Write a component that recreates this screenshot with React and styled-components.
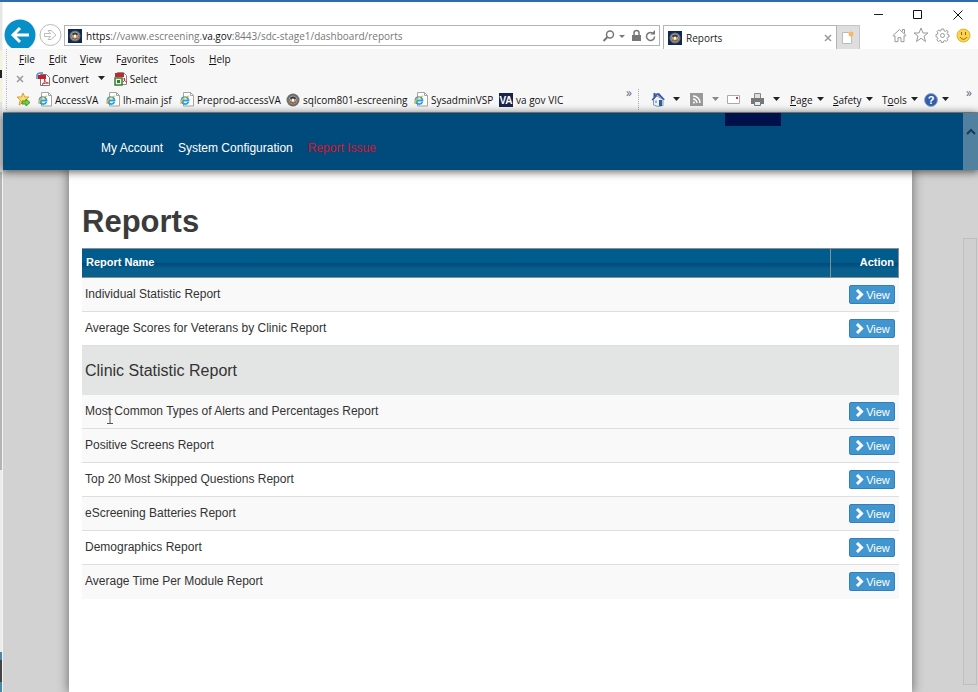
import React from "react";
import styled, { createGlobalStyle, css } from "styled-components";

const Global = createGlobalStyle`
  * { box-sizing: border-box; }
  body { margin: 0; background: #fff; font-family: "Liberation Sans", Arial, sans-serif; }
  button, input { font: inherit; }
  svg { flex: none; }
`;

const uiFont = `"Open Sans", "Noto Sans", sans-serif`;

const Desktop = styled.div`
  display: flex;
  flex-direction: column;
  height: 100vh;
  overflow: hidden;
  border-top: 2px solid #2f6ca8;
`;
const Body = styled.div`
  flex: 1;
  min-height: 0;
  display: flex;
`;
const Behind = styled.div`
  flex: none;
  width: 3px;
  border-right: 1px solid #f4f4f4;
  background: linear-gradient(#e6e6e6 0 48px, #f3f2dc 48px 68px, #222 68px 76px, #f3f2dc 76px 100px, #e2e2e2 100px 170px, #b4b4b4 170px 468px, #ececec 468px 650px, #4b86a6 650px 658px, #444 658px 680px, #4b86a6 680px);
`;
const Browser = styled.div`
  flex: 1;
  min-width: 0;
  display: flex;
  flex-direction: column;
`;
const Plain = styled.button`
  flex: none;
  display: flex;
  align-items: center;
  justify-content: center;
  border: 0;
  padding: 0;
  background: none;
  color: inherit;
`;
const Caption = styled.div`
  flex: none;
  height: 23px;
  display: flex;
  justify-content: flex-end;
  align-items: center;
  padding: 2px 11px 0 0;
  gap: 22px;
`;
const CaptionButton = styled(Plain)`
  width: 18px;
  height: 18px;
`;
const AddressRow = styled.div`
  flex: none;
  height: 24px;
  display: flex;
  align-items: flex-start;
  font-family: ${uiFont};
  font-size: 10px;
`;
const NavButtons = styled.div`
  flex: none;
  width: 61px;
  height: 29px;
  margin-top: -6px;
  display: flex;
  gap: 3px;
  overflow: hidden;
`;
const NavButton = styled(Plain)`
  align-items: flex-start;
`;
const AddressBox = styled.div`
  flex: 1;
  height: 21px;
  min-width: 0;
  display: flex;
  align-items: center;
  border: 1px solid #b4b4b4;
  padding: 0 3px;
  background: #fff;
`;
const Url = styled.a`
  flex: 1;
  min-width: 0;
  padding-left: 4px;
  overflow: hidden;
  white-space: nowrap;
  color: #777;
  text-decoration: none;
  b { font-weight: 400; color: #111; }
`;
const Tab = styled.div`
  flex: none;
  width: 174px;
  height: 24px;
  margin-left: 3px;
  display: flex;
  align-items: center;
  gap: 4px;
  padding: 0 4px;
  border: 1px solid #b4b4b4;
  border-bottom: 0;
  color: #222;
`;
const TabTitle = styled.span`
  flex: 1;
`;
const NewTab = styled(Plain)`
  width: 23px;
  height: 24px;
  background: #dedede;
  border: 1px solid #c4c4c4;
  border-left: 0;
  border-bottom: 0;
`;
const ToolIcons = styled.div`
  flex: none;
  width: 118px;
  display: flex;
  justify-content: flex-end;
  gap: 6px;
  padding: 2px 7px 0 0;
`;
const Toolbars = styled.div`
  flex: none;
  height: 64px;
  background: #f7f7f7;
  border-bottom: 1px solid #999;
  font-family: ${uiFont};
  font-size: 10px;
  color: #111;
`;
const Bar = styled.div`
  height: ${(p) => p.$h}px;
  display: flex;
  align-items: center;
  gap: ${(p) => p.$gap || 0}px;
  padding-left: ${(p) => p.$left}px;
  margin-left: 3px;
  border-left: 1px dotted #bbb;
  white-space: nowrap;
`;
const MenuItem = styled(Plain)`
  width: ${(p) => p.$w}px;
  justify-content: flex-start;
  u { text-underline-offset: 1px; }
`;
const Command = styled(Plain)`
  gap: 2px;
`;
const Favorite = styled.a`
  flex: none;
  width: ${(p) => p.$w}px;
  display: flex;
  align-items: center;
  gap: 3px;
  color: inherit;
  text-decoration: none;
`;
const CommandBar = styled.div`
  flex: none;
  width: 340px;
  height: 21px;
  display: flex;
  align-items: center;
  border-left: 1px dotted #aaa;
  padding-left: 12px;
`;
const Tool = styled(Plain)`
  width: ${(p) => p.$w}px;
  justify-content: flex-start;
  gap: 4px;
`;
const Chevrons = styled(Plain)`
  align-self: flex-start;
  line-height: 8px;
  font-size: 12px;
  color: #667;
  margin-left: ${(p) => (p.$push ? "auto" : "0")};
  margin-right: ${(p) => (p.$push ? "6px" : "0")};
`;
const Page = styled.div`
  flex: 1;
  min-height: 0;
  display: flex;
  flex-direction: column;
  background: #d2d2d2;
`;
const SiteNav = styled.nav`
  flex: none;
  height: 57px;
  position: relative;
  z-index: 1;
  display: flex;
  background: #004b7c;
  box-shadow: 0 1px 8px 1px rgba(0, 0, 0, 0.6);
`;
const NavLinks = styled.div`
  flex: 1;
  display: flex;
  gap: 15px;
  padding: 27px 0 0 98px;
  font-size: 12px;
  line-height: 16px;
`;
const NavLink = styled.a`
  color: ${(p) => (p.$alert ? "#d4142c" : "#fff")};
  text-decoration: none;
`;
const NavBlock = styled.div`
  flex: none;
  width: 56px;
  height: 13px;
  margin-right: 182px;
  background: #00104a;
`;
const ScrollTop = styled(Plain)`
  width: 15px;
  height: 57px;
  align-items: flex-start;
  padding-top: 14px;
  background: #52809f;
`;
const Scene = styled.div`
  flex: 1;
  min-height: 0;
  display: flex;
`;
const Sheet = styled.main`
  flex: 1;
  min-width: 0;
  margin: 0 51px 0 66px;
  padding: 33px 13px 0;
  background: #fff;
  box-shadow: 0 0 10px 1px rgba(0, 0, 0, 0.45);
`;
const Track = styled.div`
  flex: none;
  width: 15px;
  padding: 68px 1px 7px 0;
  display: flex;
`;
const Thumb = styled.div`
  flex: 1;
  border: 1px solid #bfbfbf;
  background: #d0d0d0;
`;
const Title = styled.h1`
  margin: 0;
  height: 45px;
  font-size: 31px;
  line-height: 38px;
  color: #3b3b3b;
`;
const ReportTable = styled.table`
  width: 100%;
  border-collapse: separate;
  border-spacing: 0;
  table-layout: fixed;
  font-size: 12px;
  color: #333;
`;
const Head = styled.th`
  width: ${(p) => (p.$end ? "69px" : "auto")};
  height: 30px;
  padding: 0 4px 2px;
  text-align: ${(p) => (p.$end ? "right" : "left")};
  font-size: 11px;
  line-height: 16px;
  color: #fff;
  background: linear-gradient(#005c8c 0 48%, #004a7a 52%, #08608e 72%, #085f8c);
  border: 1px solid #8b8f94;
  border-left-width: ${(p) => (p.$end ? "1px" : "0")};
  border-right-width: ${(p) => (p.$end ? "1px" : "0")};
`;
const Row = styled.tr`
  background: ${(p) => (p.$striped ? "#f9f9f9" : "#fff")};
`;
const Cell = styled.td`
  height: 34px;
  padding: ${(p) => (p.$end ? "7px 4px 6px" : "8px 3px 9px")};
  vertical-align: top;
  line-height: 16px;
  border-bottom: 1px solid #dedede;
  ${(p) => p.$last && css`border-bottom: 0;`}
`;
const Group = styled.td`
  height: 49px;
  padding: 0 3px;
  font-size: 16px;
  background: #e3e5e4;
`;
const ViewButton = styled.button`
  display: flex;
  align-items: center;
  justify-content: center;
  gap: 2px;
  width: 46px;
  height: 19px;
  margin-left: auto;
  padding: 0;
  border: 1px solid #357ebd;
  border-radius: 2px;
  background: #4296cf;
  color: #fff;
  font-size: 11px;
  line-height: 16px;
`;
const Pointer = styled.svg`
  position: absolute;
  left: 106px;
  top: 409px;
  z-index: 3;
`;

const Caret = ({ color = "#222" }) => (
  <svg width="7" height="5" viewBox="0 0 7 5"><path d="M0 0h7L3.500 4z" fill={color} /></svg>
);
const Seal = ({ square }) => (
  <svg width="14" height="14" viewBox="0 0 14 14">
    {square && <path d="M0 0h14v14H0z" fill="#0d2a52" />}
    <circle cx="7" cy="7" r={square ? 5.500 : 6.500} fill="#6d6f76" />
    <circle cx="7" cy="7" r="4" fill="#26406b" stroke="#a49a83" />
    <path d="M3.500 5l2 1.500L7 5l1.500 1.500 2-1.500L9.500 9 7 10 4.500 9z" fill="#d9a35c" />
    <path d="M6 6h2v2l-1 1-1-1z" fill="#fff" />
    <path d="M5 9l2 1 2-1" stroke="#c44c35" fill="none" />
  </svg>
);
const IePage = () => (
  <svg width="14" height="15" viewBox="0 0 14 15">
    <path d="M3.500.5h7l3 3v10.500h-10z" fill="#fff" stroke="#a5a5a5" />
    <path d="M10.500.5v3h3" fill="none" stroke="#a5a5a5" />
    <path d="M2 8.500h6.500C8.500 3.800 1.500 4 1.500 8.500c0 4.200 5.500 4.500 7 1.600" fill="none" stroke="#2c9fe0" strokeWidth="1.800" />
    <path d="M.8 12c-.5-3.500 4-8 8.500-7.800" fill="none" stroke="#f2bd35" strokeWidth="1.200" />
  </svg>
);
const House = () => (
  <svg width="15" height="15" viewBox="0 0 15 15" fill="none" stroke="#999">
    <path d="M1 7.500l6.500-6 6.500 6-1 1-1-.8v6H9v-4H6v4H3v-6l-1 .8z" />
    <path d="M10.500 3.500v-2h2v4" />
  </svg>
);
const ColorHouse = () => (
  <svg width="15" height="15" viewBox="0 0 15 15">
    <path d="M2.500 7.500L6 4l6 3.500v6l-5 1-4.500-1.500z" fill="#eef2f6" stroke="#8b97ab" />
    <path d="M.5 8L5 1.500 8 1l6 6.500-1.500.5L6.500 3 2 8.500z" fill="#3b5fa8" />
    <path d="M2.500 1h2v3l-2 1z" fill="#3558a5" />
    <path d="M4 8.500h2V11H4z" fill="#9dafc8" />
    <path d="M8 8h3v6H8z" fill="#2563a8" />
  </svg>
);

const favorites = [
  [68, "AccessVA", IePage],
  [74, "lh-main jsf", IePage],
  [106, "Preprod-accessVA", IePage],
  [128, "sqlcom801-escreening", Seal],
  [85, "SysadminVSP", IePage],
];
const menus = [[30, "", "F", "ile"], [31, "", "E", "dit"], [36, "", "V", "iew"], [54, "F", "a", "vorites"], [39, "", "T", "ools"], [30, "", "H", "elp"]];
const rows = [
  ["Individual Statistic Report", true],
  ["Average Scores for Veterans by Clinic Report", false],
  ["Clinic Statistic Report"],
  ["Most Common Types of Alerts and Percentages Report", true],
  ["Positive Screens Report", true],
  ["Top 20 Most Skipped Questions Report", false],
  ["eScreening Batteries Report", true],
  ["Demographics Report", false],
  ["Average Time Per Module Report", true],
];

function BrowserHeader() {
  return (
    <>
      <Caption>
        <CaptionButton aria-label="Minimize"><svg width="11" height="11"><path d="M1 5.500h9" stroke="#222" /></svg></CaptionButton>
        <CaptionButton aria-label="Maximize"><svg width="10" height="10"><path d="M.5.5h8v8h-8z" fill="none" stroke="#111" /></svg></CaptionButton>
        <CaptionButton aria-label="Close"><svg width="10" height="10"><path d="M.5.5l9 9m0-9l-9 9" stroke="#111" /></svg></CaptionButton>
      </Caption>
      <AddressRow>
        <NavButtons>
          <NavButton aria-label="Back">
            <svg width="33" height="32" viewBox="0 0 33 32"><circle cx="17" cy="16" r="15.500" fill="#078fc7" /><path d="M26 16H10m7-7l-7 7 7 7" fill="none" stroke="#fff" strokeWidth="3" /></svg>
          </NavButton>
          <NavButton aria-label="Forward">
            <svg width="24" height="30" viewBox="0 0 24 30"><circle cx="11.500" cy="16" r="10.500" fill="#fff" stroke="#bbb" /><path d="M5.500 14.500h6l-2.500-3h3l5 4.500-5 4.500H9l2.500-3h-6z" fill="#fff" stroke="#bbb" /></svg>
          </NavButton>
        </NavButtons>
        <AddressBox>
          <Seal square />
          <Url href="#reports"><b>https</b>://vaww.escreening.<b>va.gov</b>:8443/sdc-stage1/dashboard/reports</Url>
          <svg width="54" height="14" viewBox="0 0 54 14" fill="none" stroke="#777">
            <circle cx="8" cy="5.500" r="3.500" strokeWidth="1.500" /><path d="M5.500 8L1.500 12" strokeWidth="2" />
            <path d="M17 6h6l-3 3z" fill="#777" stroke="none" />
            <path d="M30 6h9v6h-9z" fill="#777" stroke="none" /><path d="M32 6V4a2.500 2.500 0 015 0v2" strokeWidth="1.500" />
            <path d="M52.500 7.500a4 4 0 11-2-3.500" strokeWidth="1.500" /><path d="M48.500 5.500H53V1z" fill="#777" stroke="none" />
          </svg>
        </AddressBox>
        <Tab>
          <Seal square /><TabTitle>Reports</TabTitle>
          <Plain aria-label="Close tab"><svg width="8" height="8"><path d="M1 1l6 6m0-6L1 7" stroke="#999" strokeWidth="1.500" /></svg></Plain>
        </Tab>
        <NewTab aria-label="New tab"><svg width="14" height="15"><path d="M1.500 2.500h6l3 3v8h-9z" fill="#fff" stroke="#bbb" /><circle cx="10" cy="4" r="2.500" fill="#f7b75f" /></svg></NewTab>
        <ToolIcons>
          <Plain aria-label="Home"><House /></Plain>
          <Plain aria-label="Favorites"><svg width="16" height="16" viewBox="0 0 16 16"><path d="M8 1l2 5h5l-4 3.200 1.500 5.300L8 11.300l-4.500 3.200L5 9.200 1 6h5z" fill="none" stroke="#999" /></svg></Plain>
          <Plain aria-label="Settings"><svg width="15" height="15" viewBox="0 0 15 15" fill="none" stroke="#999"><path d="M6.300 1h2.400l.4 1.900 1.300.5L12 2.300 13.200 4l-1.100 1.400.4 1.100 1.500.3v2.100l-1.600.4-.5 1.200 1 1.400-1.600 1.600-1.500-1-1.100.5-.4 1.500H6.500l-.4-1.600-1.200-.4-1.500 1-1.600-1.600 1-1.500-.5-1.100L1 8.700V6.500l1.500-.4L3 5 2 3.600 3.600 2l1.500 1 1-.4z" /><circle cx="7.500" cy="7.500" r="2" /></svg></Plain>
          <Plain aria-label="Feedback"><svg width="15" height="15"><circle cx="7.500" cy="7.500" r="6.500" fill="#fbd34c" stroke="#e0b238" /><path d="M5.500 4v3m4-3v3M4 9c2 3 5 3 7 0" fill="none" stroke="#8a6410" /></svg></Plain>
        </ToolIcons>
      </AddressRow>
      <Toolbars>
        <Bar $h={19} $left={12}>
          {menus.map(([w, before, key, rest]) => (
            <MenuItem key={rest} $w={w}>{before}<u>{key}</u>{rest}</MenuItem>
          ))}
        </Bar>
        <Bar $h={21} $left={9} $gap={9}>
          <Tool aria-label="Close toolbar" $w={11}><svg width="8" height="8"><path d="M1 1l6 6m0-6L1 7" stroke="#999" strokeWidth="1.500" /></svg></Tool>
          <Command>
            <svg width="14" height="14" viewBox="0 0 14 14"><path d="M4.500 2.500h6l3 3v8h-9z" fill="#fff" stroke="#777" /><path d="M2 3h8v4H2z" fill="#c3202b" /><path d="M1 7V3a3 3 0 013-2h3" fill="none" stroke="#5489c5" strokeWidth="1.500" /><path d="M6 12.500c3-2 3-4.500 2.500-6 0 4 2 4.500 4 4.500-2 0-4.500 0-6.500 1.500z" fill="none" stroke="#d8232e" /></svg>
            Convert
          </Command>
          <Caret />
          <Command>
            <svg width="14" height="14" viewBox="0 0 14 14"><path d="M3.500.5h6l3 3v9h-9z" fill="#fff" stroke="#888" /><path d="M1 1h9v4H1z" fill="#c3262c" /><path d="M1 6h7v7H1z" fill="#e8f5e4" stroke="#397e35" strokeWidth="1.500" /><path d="M3 8h3v3H3z" fill="#397e35" /><path d="M9 10c2-1 2-3 1-4 0 2 1 4 3 4" fill="none" stroke="#d8232e" /></svg>
            Select
          </Command>
        </Bar>
        <Bar $h={21} $left={9}>
          <Favorite href="#add" aria-label="Add favorite" $w={22}><svg width="15" height="15" viewBox="0 0 15 15"><path d="M7 1l1.700 4H13l-3.500 3 1.500 5-4-2.500L3 13l1.300-5L1 5h4.300z" fill="#ffdc69" stroke="#d8a03c" /><path d="M6 9h4V7l4 3.500-4 3.500v-2H6z" fill="#74d044" stroke="#46952d" /></svg></Favorite>
          {favorites.map(([w, text, Icon]) => <Favorite href="#favorite" key={text} $w={w}><Icon />{text}</Favorite>)}
          <Favorite href="#vic" $w={90}>
            <svg width="14" height="14"><path d="M0 0h14v14H0z" fill="#19244d" /><text x="7" y="11" textAnchor="middle" fontSize="10" fontWeight="700" fontFamily="Liberation Sans" fill="#fff">VA</text></svg>
            va gov VIC
          </Favorite>
          <Chevrons $push aria-label="More favorites">»</Chevrons>
          <CommandBar>
            <Tool $w={22} aria-label="Home page"><ColorHouse /></Tool>
            <Tool $w={17} aria-label="Home options"><Caret /></Tool>
            <Tool $w={22} aria-label="Feeds"><svg width="13" height="13"><path d="M0 0h13v13H0z" fill="#999" /><path d="M3 3c4 0 7 3 7 7M3 6c2 0 4 2 4 4" fill="none" stroke="#fff" strokeWidth="1.500" /><circle cx="4" cy="9.500" r="1" fill="#fff" /></svg></Tool>
            <Tool $w={15} aria-label="Feed options"><Caret color="#888" /></Tool>
            <Tool $w={23} aria-label="Mail"><svg width="13" height="10"><path d="M.5.5h12v8h-12z" fill="#fff" stroke="#aaa" /><path d="M9 2h2v2H9z" fill="#d34" /></svg></Tool>
            <Tool $w={23} aria-label="Print"><svg width="15" height="14"><path d="M4.500.5h6v5h-6z" fill="#ddd" stroke="#888" /><path d="M1 5h13v6H1z" fill="#777" /><path d="M4.500 8.500h6v4h-6z" fill="#d9f1fa" stroke="#777" /></svg></Tool>
            <Tool $w={17} aria-label="Print options"><Caret /></Tool>
            <Tool $w={43}><span><u>P</u>age</span><Caret /></Tool>
            <Tool $w={49}><span><u>S</u>afety</span><Caret /></Tool>
            <Tool $w={42}><span>T<u>o</u>ols</span><Caret /></Tool>
            <Tool $w={42} aria-label="Help"><svg width="14" height="14"><circle cx="7" cy="7" r="6.500" fill="#315fa9" stroke="#9cabc5" /><text x="7" y="11" textAnchor="middle" fontSize="11" fontWeight="700" fontFamily="Liberation Sans" fill="#fff">?</text></svg><Caret /></Tool>
            <Chevrons aria-label="More commands">»</Chevrons>
          </CommandBar>
        </Bar>
      </Toolbars>
    </>
  );
}

export default function App() {
  return (
    <>
      <Global />
      <Desktop>
        <Body>
          <Behind />
          <Browser>
            <BrowserHeader />
            <Page>
              <SiteNav>
                <NavLinks>
                  <NavLink href="#account">My Account</NavLink>
                  <NavLink href="#config">System Configuration</NavLink>
                  <NavLink href="#issue" $alert>Report Issue</NavLink>
                </NavLinks>
                <NavBlock />
                <ScrollTop aria-label="Scroll up"><svg width="12" height="8"><path d="M2 7l4-4 4 4" fill="none" stroke="#183b55" strokeWidth="2" /></svg></ScrollTop>
              </SiteNav>
              <Scene>
                <Sheet>
                  <Title>Reports</Title>
                  <ReportTable>
                    <thead><tr><Head>Report Name</Head><Head $end>Action</Head></tr></thead>
                    <tbody>
                      {rows.map(([name, striped], i) => (
                        <Row key={name} $striped={striped}>
                          {striped === undefined ? <Group colSpan={2}>{name}</Group> : (
                            <>
                              <Cell $last={i === rows.length - 1}>{name}</Cell>
                              <Cell $end $last={i === rows.length - 1}>
                                <ViewButton><svg width="10" height="11" viewBox="0 0 10 11"><path d="M3 1l4.500 4.500L3 10" fill="none" stroke="#fff" strokeWidth="3" /></svg>View</ViewButton>
                              </Cell>
                            </>
                          )}
                        </Row>
                      ))}
                    </tbody>
                  </ReportTable>
                </Sheet>
                <Track><Thumb /></Track>
              </Scene>
            </Page>
          </Browser>
        </Body>
      </Desktop>
      <Pointer width="8" height="15"><path d="M1 .5h6M4 1v13M1 14.500h6" stroke="#555" fill="none" /></Pointer>
    </>
  );
}
